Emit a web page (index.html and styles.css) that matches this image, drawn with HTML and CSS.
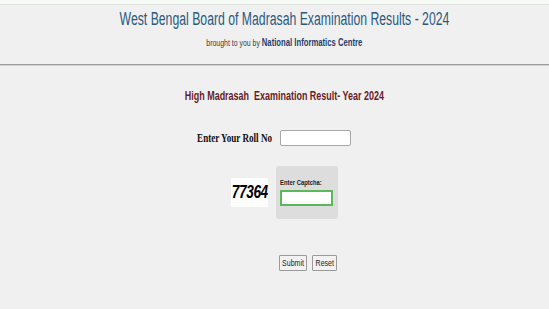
FILE: index.html
```html
<!DOCTYPE html>
<html>
<head>
<meta charset="utf-8">
<link rel="stylesheet" href="styles.css">
</head>
<body>
<div class="topstrip"></div>
<header class="header">
  <h1 class="title"><span class="squeeze t68">West Bengal Board of Madrasah Examination Results - 2024</span></h1>
  <p class="credit"><span class="squeeze t77">brought to you by <b class="nic">National Informatics Centre</b></span></p>
</header>
<main class="main">
  <h2 class="exam"><span class="squeeze t69">High Madrasah&nbsp; Examination Result- Year 2024</span></h2>
  <div class="rollrow">
    <label class="rolllabel"><span class="squeeze right t70">Enter Your Roll No</span></label>
    <input class="rollinput" type="text">
  </div>
  <div class="captcharow">
    <div class="captchaimg"><span class="captchatext squeeze t76">77364</span></div>
    <div class="captchabox">
      <div class="captchalabel"><span class="squeeze left t84">Enter Captcha:</span></div>
      <input class="captchainput" type="text">
    </div>
  </div>
  <div class="buttons">
    <button class="btn submit"><span class="squeeze t78">Submit</span></button>
    <button class="btn reset"><span class="squeeze t78">Reset</span></button>
  </div>
</main>
</body>
</html>
```
FILE: styles.css
```css
html, body {
  margin: 0;
  padding: 0;
  background: #f0f0f0;
  height: 100%;
}
body {
  font-family: "Liberation Sans", Arial, sans-serif;
}
.squeeze {
  display: inline-block;
  white-space: nowrap;
  transform-origin: center center;
}
.squeeze.right { transform-origin: right center; }
.squeeze.left { transform-origin: left center; }
.t68 { transform: scaleX(0.68); }
.t69 { transform: scaleX(0.69); }
.t70 { transform: scaleX(0.70); }
.t76 { transform: scaleX(0.76); }
.t77 { transform: scaleX(0.77); }
.t78 { transform: scaleX(0.78); }
.t84 { transform: scaleX(0.84); }
.topstrip {
  height: 4px;
  background: #f5faf5;
  border-bottom: 1px solid #dfe3df;
}
.header {
  height: 59px;
  border-bottom: 1px solid #9a9a9a;
  box-shadow: 0 1px 0 #d0d0d0;
  text-align: center;
  padding-left: 20px;
}
.title {
  margin: 0;
  padding-top: 3px;
  font-size: 18px;
  font-weight: normal;
  color: #2a5a82;
  line-height: 22px;
}
.credit {
  margin: 7px 0 0;
  font-size: 9px;
  color: #3a3a3a;
  line-height: 12px;
}
.nic {
  font-size: 10px;
  color: #1f3e6e;
}
.main {
  text-align: center;
}
.exam {
  margin: 23px 0 0;
  padding-left: 20px;
  font-size: 13px;
  font-weight: bold;
  color: #6b1b1e;
  line-height: 16px;
}
.rollrow {
  display: flex;
  justify-content: center;
  align-items: center;
  gap: 7px;
  margin-top: 26px;
}
.rolllabel {
  width: 74px;
  display: flex;
  justify-content: flex-end;
  font-family: "Liberation Serif", "Times New Roman", serif;
  font-weight: bold;
  font-size: 13px;
  color: #111;
}
.rollinput {
  width: 71px;
  height: 16px;
  box-sizing: border-box;
  padding: 1px;
  border: 1px solid #a8a8a8;
  border-radius: 2px;
  background: #fff;
}
.captcharow {
  display: flex;
  justify-content: center;
  align-items: center;
  gap: 8px;
  margin-top: 20px;
  padding-left: 20px;
}
.captchaimg {
  width: 37px;
  height: 29px;
  background: #fff;
  display: flex;
  align-items: center;
  justify-content: center;
}
.captchatext {
  font-style: italic;
  font-weight: bold;
  font-size: 18px;
  color: #000;
  letter-spacing: -0.5px;
}
.captchabox {
  width: 62px;
  height: 53px;
  background: #dddddd;
  border-radius: 3px;
  box-sizing: border-box;
  padding: 12px 0 0 4px;
  text-align: left;
}
.captchalabel {
  font-size: 7px;
  font-weight: bold;
  color: #222;
  line-height: 9px;
}
.captchainput {
  display: block;
  margin-top: 3px;
  width: 53px;
  height: 16px;
  box-sizing: border-box;
  border: 2px solid #5cb85c;
  background: #fff;
  padding: 0;
}
.buttons {
  display: flex;
  justify-content: center;
  gap: 5px;
  margin-top: 36px;
  padding-left: 67px;
}
.btn {
  font-family: "Liberation Sans", Arial, sans-serif;
  font-size: 9px;
  height: 16px;
  padding: 0;
  border: 1px solid #9a9a9a;
  background: #f2f2f2;
  color: #222;
  border-radius: 1px;
  line-height: 14px;
  display: flex;
  justify-content: center;
  align-items: center;
  overflow: visible;
}
.btn.submit { width: 28px; }
.btn.reset { width: 25px; }
```
